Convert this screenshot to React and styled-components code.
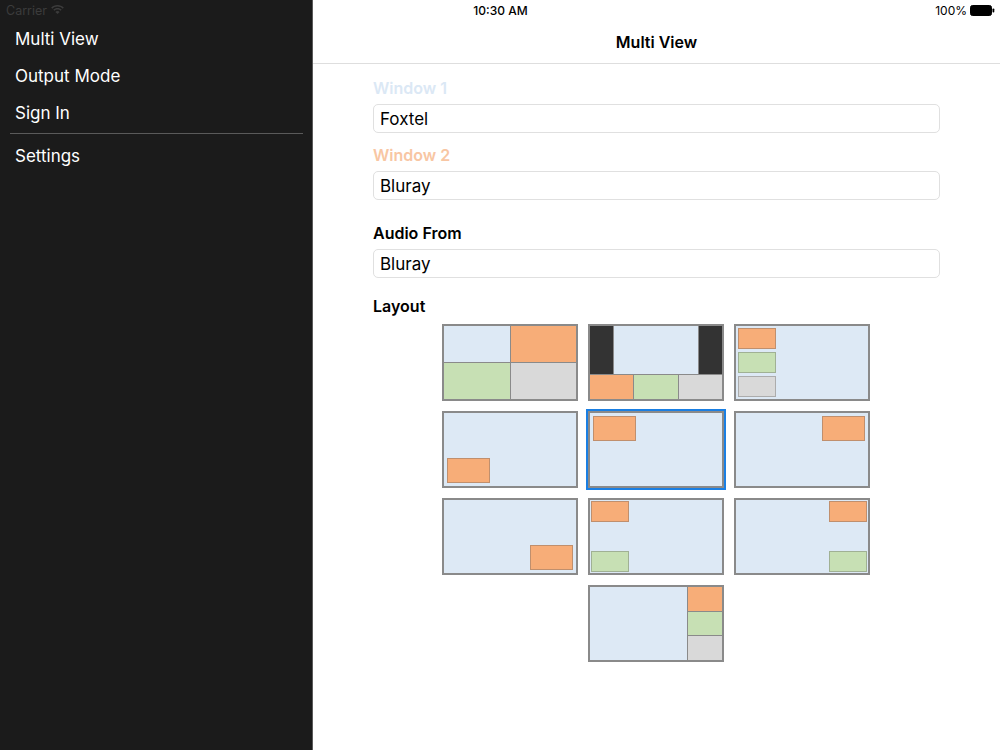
import React from 'react';
import styled, { createGlobalStyle } from 'styled-components';

const GlobalStyle = createGlobalStyle`
  html, body {
    margin: 0;
    padding: 0;
    background: #ffffff;
  }
  body {
    font-family: "Inter", "Roboto", "Liberation Sans", sans-serif;
    -webkit-font-smoothing: antialiased;
  }
`;

const colors = {
  blue: '#dde9f5',
  orange: '#f7ad78',
  green: '#c7e0b4',
  gray: '#d9d9d9',
  dark: '#333333',
  frame: '#8a8a8a',
};

const Screen = styled.div`
  position: relative;
  display: flex;
  width: 1000px;
  height: 750px;
  overflow: hidden;
`;

const StatusBar = styled.div`
  position: absolute;
  top: 0;
  left: 0;
  right: 0;
  height: 20px;
  display: grid;
  grid-template-columns: 1fr auto 1fr;
  align-items: center;
  padding: 0 5px 0 6px;
  font-size: 12px;
  z-index: 2;
`;

const Carrier = styled.div`
  display: flex;
  align-items: center;
  gap: 4px;
  color: #3c3c3c;
  font-size: 12.5px;
`;

const Clock = styled.div`
  color: #000;
  font-weight: 500;
`;

const Battery = styled.div`
  display: flex;
  align-items: center;
  justify-content: flex-end;
  gap: 3px;
  color: #000;
`;

const Sidebar = styled.nav`
  width: 313px;
  flex-shrink: 0;
  background: #1b1b1b;
  border-right: 1px solid #5a5a5a;
  padding-top: 21px;
  box-sizing: border-box;
`;

const MenuItem = styled.div`
  height: 37px;
  line-height: 37px;
  padding-left: 15px;
  color: #ffffff;
  font-size: 17px;
`;

const MenuDivider = styled.div`
  height: 1px;
  background: #5a5a5a;
  margin: 1px 9px 4px 10px;
`;

const Main = styled.main`
  flex: 1;
  display: flex;
  flex-direction: column;
  background: #ffffff;
`;

const Header = styled.header`
  height: 64px;
  box-sizing: border-box;
  padding-top: 20px;
  border-bottom: 1px solid #dedede;
  display: flex;
  align-items: center;
  justify-content: center;
  font-size: 16px;
  font-weight: 600;
  color: #000;
`;

const Form = styled.div`
  padding: 14px 60px 0 60px;
  display: flex;
  flex-direction: column;
`;

const Label = styled.div`
  font-size: 16px;
  font-weight: 600;
  line-height: 20px;
  color: ${(p) => p.$color || '#000'};
  margin-top: ${(p) => p.$gap || 0}px;
  margin-bottom: 6px;
`;

const Field = styled.div`
  height: 29px;
  box-sizing: border-box;
  border: 1px solid #e0e0e0;
  border-radius: 5px;
  padding-left: 6px;
  display: flex;
  align-items: center;
  font-size: 17px;
  color: #000;
`;

const Grid = styled.div`
  margin: 2px 0 0 69px;
  align-self: flex-start;
  display: grid;
  grid-template-columns: repeat(3, 136px);
  grid-auto-rows: 77px;
  gap: 10px;
`;

const Tile = styled.div`
  box-sizing: border-box;
  background: ${colors.blue};
  border: 2px solid ${colors.frame};
  outline: ${(p) => (p.$selected ? '2px solid #1a7fe3' : 'none')};
  outline-offset: 0;
  grid-column: ${(p) => p.$column || 'auto'};
  overflow: hidden;
`;

const Quad = styled(Tile)`
  display: grid;
  grid-template-columns: 1fr 1fr;
  grid-template-rows: 1fr 1fr;
  gap: 1px;
  background: ${colors.frame};
`;

const Letterbox = styled(Tile)`
  display: grid;
  grid-template-rows: 48px 1fr;
  gap: 1px;
  background: ${colors.frame};
`;

const Strip = styled.div`
  display: grid;
  grid-template-columns: ${(p) => p.$cols};
  gap: 1px;
`;

const SideSplit = styled(Tile)`
  display: grid;
  grid-template-columns: 1fr 34px;
  grid-template-rows: repeat(3, 1fr);
  gap: 1px;
  background: ${colors.frame};
`;

const Cell = styled.div`
  background: ${(p) => colors[p.$fill]};
  grid-row: ${(p) => p.$row || 'auto'};
`;

const Canvas = styled(Tile)`
  display: flex;
  flex-direction: column;
  justify-content: ${(p) => p.$v || 'flex-start'};
  align-items: ${(p) => p.$h || 'flex-start'};
  gap: ${(p) => p.$gap || 0}px;
  padding: ${(p) => p.$pad ?? 2}px;
`;

const Pip = styled.div`
  box-sizing: border-box;
  width: ${(p) => p.$w || 43}px;
  height: ${(p) => p.$hgt || 25}px;
  background: ${(p) => colors[p.$fill || 'orange']};
  border: 1px solid rgba(90, 90, 90, 0.35);
  flex-shrink: 0;
`;

function WifiIcon() {
  return (
    <svg width="13" height="10" viewBox="0 0 13 10" fill="#3c3c3c">
      <path d="M6.5 0C4 0 1.8 1 0.2 2.6l1.1 1.1C2.6 2.3 4.5 1.5 6.5 1.5s3.9.8 5.2 2.2l1.1-1.1C11.2 1 9 0 6.5 0z" />
      <path d="M6.5 3C4.9 3 3.4 3.6 2.3 4.7l1.1 1.1c.8-.8 1.9-1.3 3.1-1.3s2.3.5 3.1 1.3l1.1-1.1C9.6 3.6 8.1 3 6.5 3z" />
      <path d="M6.5 6c-.8 0-1.5.3-2.1.9L6.5 9l2.1-2.1C8 6.3 7.3 6 6.5 6z" />
    </svg>
  );
}

function BatteryIcon() {
  return (
    <svg width="25" height="11" viewBox="0 0 25 11">
      <rect x="0.5" y="0.5" width="21" height="10" rx="2" fill="#000" stroke="#000" />
      <rect x="22.5" y="3.5" width="1.8" height="4" rx="0.8" fill="#000" />
    </svg>
  );
}

function Layouts() {
  return (
    <Grid>
      <Quad>
        <Cell $fill="blue" />
        <Cell $fill="orange" />
        <Cell $fill="green" />
        <Cell $fill="gray" />
      </Quad>
      <Letterbox>
        <Strip $cols="23px 1fr 23px">
          <Cell $fill="dark" />
          <Cell $fill="blue" />
          <Cell $fill="dark" />
        </Strip>
        <Strip $cols="1fr 1fr 1fr">
          <Cell $fill="orange" />
          <Cell $fill="green" />
          <Cell $fill="gray" />
        </Strip>
      </Letterbox>
      <Canvas $gap={3} $pad={2}>
        <Pip $w={38} $hgt={21} />
        <Pip $w={38} $hgt={21} $fill="green" />
        <Pip $w={38} $hgt={21} $fill="gray" />
      </Canvas>

      <Canvas $v="flex-end" $pad={3}>
        <Pip />
      </Canvas>
      <Canvas $selected $pad={3}>
        <Pip />
      </Canvas>
      <Canvas $h="flex-end" $pad={3}>
        <Pip />
      </Canvas>

      <Canvas $v="flex-end" $h="flex-end" $pad={3}>
        <Pip />
      </Canvas>
      <Canvas $v="space-between" $pad={1}>
        <Pip $w={38} $hgt={21} />
        <Pip $w={38} $hgt={21} $fill="green" />
      </Canvas>
      <Canvas $v="space-between" $h="flex-end" $pad={1}>
        <Pip $w={38} $hgt={21} />
        <Pip $w={38} $hgt={21} $fill="green" />
      </Canvas>

      <SideSplit $column="2">
        <Cell $fill="blue" $row="1 / 4" />
        <Cell $fill="orange" />
        <Cell $fill="green" />
        <Cell $fill="gray" />
      </SideSplit>
    </Grid>
  );
}

export default function App() {
  return (
    <>
      <GlobalStyle />
      <Screen>
        <StatusBar>
          <Carrier>
            Carrier <WifiIcon />
          </Carrier>
          <Clock>10:30 AM</Clock>
          <Battery>
            100% <BatteryIcon />
          </Battery>
        </StatusBar>

        <Sidebar>
          <MenuItem>Multi View</MenuItem>
          <MenuItem>Output Mode</MenuItem>
          <MenuItem>Sign In</MenuItem>
          <MenuDivider />
          <MenuItem>Settings</MenuItem>
        </Sidebar>

        <Main>
          <Header>Multi View</Header>
          <Form>
            <Label $color="#dbe8f5">Window 1</Label>
            <Field>Foxtel</Field>
            <Label $color="#f8c6a3" $gap={12}>Window 2</Label>
            <Field>Bluray</Field>
            <Label $gap={23}>Audio From</Label>
            <Field>Bluray</Field>
            <Label $gap={18}>Layout</Label>
            <Layouts />
          </Form>
        </Main>
      </Screen>
    </>
  );
}
